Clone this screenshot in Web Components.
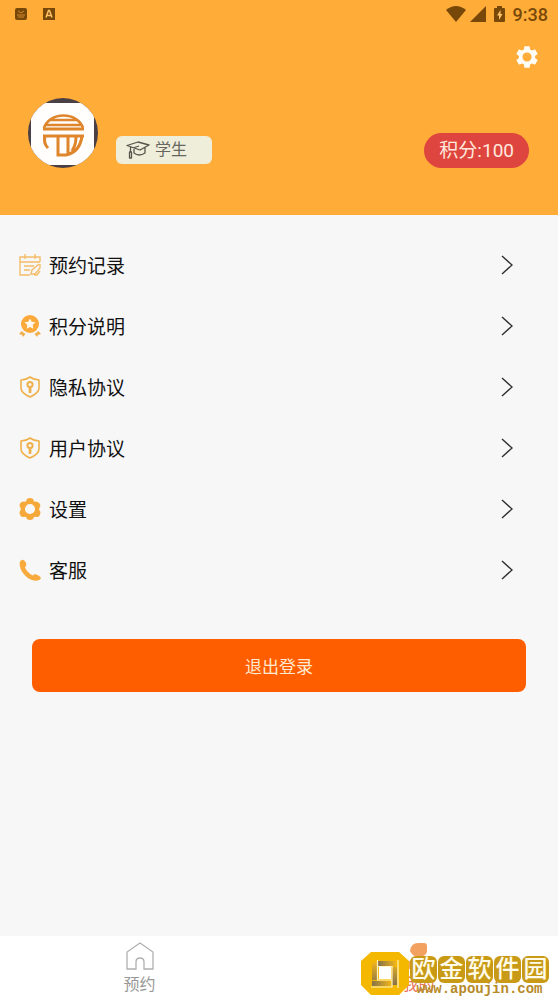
<!DOCTYPE html>
<html lang="zh-CN">
<head>
<meta charset="utf-8">
<meta name="viewport" content="width=device-width, initial-scale=1">
<title>我的</title>
<style>
  body {
    background-color: #f7f7f7;
    color: #111111;
    font-family: Roboto, 'Noto Sans CJK SC', sans-serif;
    margin: 0;
  }
</style>
</head>
<body>
<my-page></my-page>

<script>
const ICONS = {
  mail: '<svg viewBox="0 0 12 12"><rect width="12" height="12" rx="2" fill="#784808"/><path d="M3 3l3 2 3-2M2 7h8M3 9h6" fill="none" stroke="#d08a2c"/></svg>',
  letter: '<svg viewBox="0 0 12 12"><path d="M0 0h12v12H0z" fill="#784808"/><path d="M3 9.500l2.500-7h1l2.500 7M4 7.500h4" fill="none" stroke="#ffc266" stroke-width="1.500"/></svg>',
  wifi: '<svg viewBox="0 0 20 16"><path d="M0 4Q10-4 20 4L10 16z" fill="#784808"/></svg>',
  signal: '<svg viewBox="0 0 16 16"><path d="M16 0v16H0z" fill="#784808"/></svg>',
  battery: '<svg viewBox="0 0 11 16"><path d="M3 0h5v2h2q1 0 1 1v12q0 1-1 1H1q-1 0-1-1V3q0-1 1-1h2z" fill="#784808"/><path d="M6.500 4L3 9.500h2V14l3.500-6h-2z" fill="#ffc266"/></svg>',
  gear: '<svg viewBox="0 0 24 24"><path fill="currentColor" d="M19.430 12.980c.04-.32.07-.64.07-.98s-.03-.66-.07-.98l2.110-1.650c.19-.15.24-.42.12-.64l-2-3.460c-.12-.22-.39-.3-.61-.22l-2.490 1c-.52-.4-1.080-.73-1.690-.98l-.38-2.650A.49.49 0 0 0 14 2h-4c-.25 0-.46.18-.49.42l-.38 2.650c-.61.25-1.170.59-1.690.98l-2.490-1c-.23-.09-.49 0-.61.22l-2 3.460c-.13.22-.07.49.12.64l2.110 1.650c-.04.32-.07.65-.07.98s.03.66.07.98l-2.110 1.650c-.19.15-.24.42-.12.64l2 3.460c.12.22.39.3.61.22l2.490-1c.52.4 1.080.73 1.690.98l.38 2.650c.03.24.24.42.49.42h4c.25 0 .46-.18.49-.42l.38-2.650c.61-.25 1.170-.59 1.690-.98l2.490 1c.23.09.49 0 .61-.22l2-3.460c.12-.22.07-.49-.12-.64zM12 16.200a4.200 4.200 0 1 1 0-8.400 4.200 4.200 0 0 1 0 8.400z"/></svg>',
  cap: '<svg viewBox="0 0 24 18" fill="none" stroke="#55554c" stroke-width="1.300" stroke-linejoin="round"><path d="M1 4.500L12 1l11 3-9 5zM8 8v4q5 4 11 0V6.500M7 7l6-2M4.500 6v5M3.500 11h2v6h-2z"/></svg>',
  calendar: '<svg viewBox="0 0 22 22" fill="none" stroke="#f3bd69" stroke-width="1.400"><path d="M21 8V3H1v18h10M1 8h20M6 0v5M16 0v5M5 12h10M5 16h6M20 10l-7 6-1 4h4l5-6v-4M15 21h3l3-4"/></svg>',
  medal: '<svg viewBox="0 0 22 22"><circle cx="11" cy="9" r="9" fill="#fba93a"/><path d="M11 3.500l1.700 3.200 3.800.6-2.800 2.700.6 3.800-3.300-1.800-3.300 1.800.6-3.800L5.500 7.300l3.800-.6z" fill="#fff8ec"/><path d="M2.500 16l4 3-2.500 3-1-2-3-1zM19.500 16l-4 3 2.500 3 1-2 3-1z" fill="#f0b050"/></svg>',
  shield: '<svg viewBox="0 0 22 22" fill="none" stroke="#efb04b" stroke-width="1.600"><path d="M11 1q4 3 9 3v8q0 5-9 9-9-4-9-9V4q5 0 9-3z" stroke-linejoin="round"/><circle cx="11" cy="8.500" r="2.600" stroke-width="2"/><path d="M11 11v6M11 14h1.500" stroke-width="2.600"/></svg>',
  flower: '<svg viewBox="0 0 24 24"><path fill="#f6a93b" fill-rule="evenodd" d="M8 3Q8 0 12 0t4 3l1 1q3-1 5 1.500t1 4q-2 2.500 0 5 1 2-.5 4.500T18 20.500L16 21q0 3-4 3t-4-3l-2-.5Q3 21.500 1.500 19T1 14.500q2-2.500 0-5-1-1.500.5-4T7 4zM12 6.500a5.500 5.500 0 1 0 0 11 5.500 5.500 0 0 0 0-11z"/></svg>',
  phone: '<svg viewBox="0 0 24 24"><path fill="#f8aa3c" d="M1 3Q3 0 5 1q3 2 3 5 0 2-1.500 3Q9 15 15 18q2-2 4-1 3 1 4.500 3 1 2-1.500 3-6 2-12-2Q2 15 1 8q-.5-3 0-5z"/></svg>',
  arrow: '<svg viewBox="0 0 12 20"><path d="M1 1l10 9L1 19" fill="none" stroke="#303030" stroke-width="1.400"/></svg>',
  home: '<svg viewBox="0 0 28 28"><path d="M1 27V10L14 1l13 9v17h-9v-7q0-4-4-4t-4 4v7z" fill="none" stroke="#b0b0b0" stroke-width="1.300"/></svg>',
  person: '<svg viewBox="0 0 28 28"><path d="M5 9q1-8 8-8h6q3 0 3 3v6q-2 5-8 5-6 0-9-6z" fill="#f2a160"/><path d="M1 27q0-9 10-11h6q10 2 10 11z" fill="#f2a160"/></svg>',
  avatar: '<svg viewBox="0 0 70 70"><clipPath id="round"><circle cx="35" cy="35" r="35"/></clipPath><g clip-path="url(#round)"><path fill="#493f45" d="M0 0h70v70H0z"/><rect x="3" y="5" width="63" height="62" fill="#fffefc"/></g><g fill="none" stroke="#df852b" stroke-width="3"><path d="M16 30A20 16 0 0 1 55 30M21 22h29M17 27h37" stroke-width="2.600"/><path d="M15 31h41M15 38h41M54 38Q52 54 38 57h-8V39M40 39v17M17 38q-2 7 3 12M48 39q0 8-4 14"/></g></svg>',
  ring: '<svg viewBox="0 0 48 43"><defs><linearGradient id="fade"><stop stop-color="#85724a"/><stop offset="1" stop-color="#f0b51c"/></linearGradient><linearGradient id="drop" x2="0" y2="1"><stop stop-color="#f0b51c"/><stop offset="1" stop-color="#85724a"/></linearGradient></defs><path fill="#f5b800" fill-rule="evenodd" d="M10 0h28l10 9v24l-10 10H10L0 33V9zM18 15v12h12V15z"/><path fill="url(#fade)" d="M17 9h18v5H17z"/><path fill="url(#drop)" d="M11 10h5v18h-5zM31 15h5v18h-5z"/><path fill="url(#fade)" d="M11 29h19v5H11z"/><path d="M16.500 8v20H31M37 8v28M10 35h21V14.500H17" fill="none" stroke="#fff3c4" stroke-width="1.200"/></svg>'
};

function render( host, markup ) {
  const template = document.createElement( 'template' );
  template.innerHTML = markup;
  host.attachShadow( {mode: 'open'} ).appendChild( template.content.cloneNode( true ) );
}

class Icon extends HTMLElement {
  connectedCallback() {
    if( this.shadowRoot ) return;

    render( this, `
      <style>
        :host {
          display: block;
          flex-shrink: 0;
          width: 22px;
        }

        svg {
          display: block;
          width: 100%;
        }
      </style>
      ${ICONS[this.getAttribute( 'name' )]}
    ` );
    this.setAttribute( 'aria-hidden', 'true' );
  }
}

class StatusBar extends HTMLElement {
  constructor() {
    super();
    render( this, `
      <style>
        :host {
          align-items: center;
          color: #784808;
          display: flex;
          font-size: 18px;
          font-weight: 500;
          gap: 4px;
          height: 28px;
          padding: 0 10px 0 15px;
        }

        .small { width: 12px; }
        .letter { margin: 0 auto 0 12px; }
        .wifi { width: 20px; }
        .signal { width: 16px; }
        .battery {
          margin: 0 4px;
          width: 11px;
        }
      </style>
      <my-icon class="small" name="mail"></my-icon>
      <my-icon class="small letter" name="letter"></my-icon>
      <my-icon class="wifi" name="wifi"></my-icon>
      <my-icon class="signal" name="signal"></my-icon>
      <my-icon class="battery" name="battery"></my-icon>
      <time>9:38</time>
    ` );
  }
}

class ProfileHeader extends HTMLElement {
  constructor() {
    super();
    render( this, `
      <style>
        :host {
          background-color: #ffac38;
          display: block;
          padding-bottom: 47px;
        }

        .tools {
          display: flex;
          justify-content: flex-end;
          padding: 16px 18px 14px;
        }

        button {
          background: none;
          border: none;
          color: #fffdf5;
          cursor: pointer;
          padding: 0;
        }

        button my-icon { width: 26px; }

        .profile {
          align-items: flex-end;
          display: flex;
          gap: 18px;
          padding: 14px 29px 0 28px;
        }

        .avatar { width: 70px; }

        .role {
          align-items: center;
          background-color: #efeedb;
          border-radius: 6px;
          box-sizing: border-box;
          color: #66665e;
          display: flex;
          font-size: 16px;
          gap: 5px;
          line-height: 28px;
          margin-bottom: 4px;
          padding: 0 10px;
          width: 96px;
        }

        .role my-icon { width: 24px; }

        .points {
          background-color: #df453f;
          border-radius: 18px;
          color: #ffe9dc;
          font-size: 19px;
          line-height: 35px;
          margin-left: auto;
          padding: 0 15px;
        }
      </style>
      <status-bar></status-bar>
      <div class="tools">
        <button type="button" aria-label="设置"><my-icon name="gear"></my-icon></button>
      </div>
      <div class="profile">
        <my-icon class="avatar" name="avatar"></my-icon>
        <div class="role"><my-icon name="cap"></my-icon><slot name="role"></slot></div>
        <div class="points"><slot name="points"></slot></div>
      </div>
    ` );
  }
}

class MenuItem extends HTMLElement {
  connectedCallback() {
    if( this.shadowRoot ) return;

    render( this, `
      <style>
        :host { display: block; }

        a {
          align-items: center;
          color: inherit;
          display: flex;
          font-size: 19px;
          gap: 8px;
          height: 61px;
          padding: 0 45px 0 19px;
          text-decoration: none;
        }

        .arrow {
          margin-left: auto;
          width: 12px;
        }
      </style>
      <a href="#">
        <my-icon name="${this.getAttribute( 'icon' )}"></my-icon>
        <slot></slot>
        <my-icon class="arrow" name="arrow"></my-icon>
      </a>
    ` );
  }
}

class TabItem extends HTMLElement {
  connectedCallback() {
    if( this.shadowRoot ) return;

    render( this, `
      <style>
        :host {
          color: #999999;
          flex: 1;
        }

        :host( [selected] ) { color: #e8755a; }

        a {
          align-items: center;
          color: inherit;
          display: flex;
          flex-direction: column;
          font-size: 16px;
          gap: 3px;
          line-height: 24px;
          padding: 6px 0 1px;
          text-decoration: none;
        }

        my-icon { width: 28px; }
      </style>
      <a href="#">
        <my-icon name="${this.getAttribute( 'icon' )}"></my-icon>
        <slot></slot>
      </a>
    ` );
  }
}

class SiteMark extends HTMLElement {
  constructor() {
    super();
    render( this, `
      <style>
        :host {
          align-items: center;
          bottom: 3px;
          display: flex;
          gap: 1px;
          pointer-events: none;
          position: absolute;
          right: 9px;
        }

        .ring { width: 48px; }

        .text { padding-top: 4px; }

        .name {
          display: flex;
          gap: 1px;
        }

        .name span {
          background-color: #c99a16;
          border-radius: 6px;
          color: #fffbe8;
          font-size: 24px;
          font-weight: 500;
          line-height: 27px;
          text-align: center;
          width: 27px;
        }

        .site {
          color: #b78a2a;
          font-family: 'Liberation Mono', monospace;
          font-size: 14px;
          font-weight: 700;
          line-height: 12px;
          text-align: center;
        }
      </style>
      <my-icon class="ring" name="ring"></my-icon>
      <div class="text">
        <div class="name"><span>欧</span><span>金</span><span>软</span><span>件</span><span>园</span></div>
        <div class="site">www.apoujin.com</div>
      </div>
    ` );
  }
}

class Page extends HTMLElement {
  constructor() {
    super();
    render( this, `
      <style>
        :host {
          display: flex;
          flex-direction: column;
          min-height: 100vh;
        }

        main {
          flex-grow: 1;
          padding-top: 19px;
        }

        .logout {
          padding: 39px 32px;
        }

        button {
          background-color: #ff5e00;
          border: none;
          border-radius: 8px;
          color: #ffe8d0;
          cursor: pointer;
          display: block;
          font: inherit;
          font-size: 17px;
          height: 53px;
          padding: 0;
          width: 100%;
        }

        footer {
          background-color: #ffffff;
          display: flex;
          position: relative;
        }
      </style>
      <profile-header>
        <span slot="role">学生</span>
        <span slot="points">积分:100</span>
      </profile-header>
      <main>
        <nav>
          <menu-item icon="calendar">预约记录</menu-item>
          <menu-item icon="medal">积分说明</menu-item>
          <menu-item icon="shield">隐私协议</menu-item>
          <menu-item icon="shield">用户协议</menu-item>
          <menu-item icon="flower">设置</menu-item>
          <menu-item icon="phone">客服</menu-item>
        </nav>
        <div class="logout"><button type="button">退出登录</button></div>
      </main>
      <footer>
        <tab-item icon="home">预约</tab-item>
        <tab-item icon="person" selected>我的</tab-item>
        <site-mark></site-mark>
      </footer>
    ` );
  }
}

window.customElements.define( 'my-icon', Icon );
window.customElements.define( 'status-bar', StatusBar );
window.customElements.define( 'profile-header', ProfileHeader );
window.customElements.define( 'menu-item', MenuItem );
window.customElements.define( 'tab-item', TabItem );
window.customElements.define( 'site-mark', SiteMark );
window.customElements.define( 'my-page', Page );
</script>
</body>
</html>
